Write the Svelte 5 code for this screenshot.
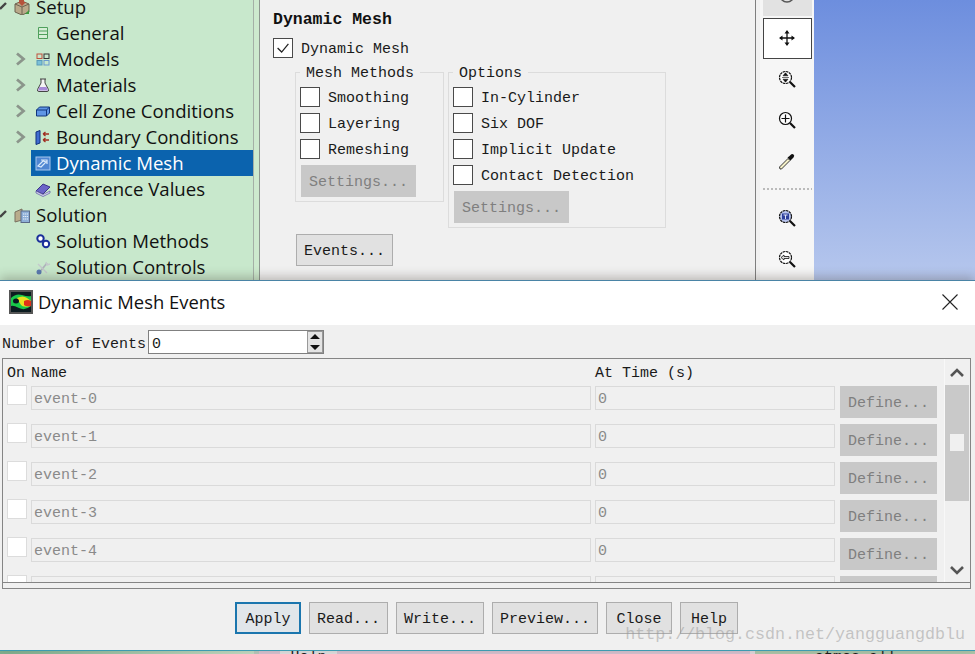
<script lang="ts">
  const tree = [
    { label: "Setup", top: true, open: true, icon: "setup" },
    { label: "General", icon: "general" },
    { label: "Models", arrow: true, icon: "models" },
    { label: "Materials", arrow: true, icon: "materials" },
    { label: "Cell Zone Conditions", arrow: true, icon: "cell" },
    { label: "Boundary Conditions", arrow: true, icon: "boundary" },
    { label: "Dynamic Mesh", selected: true, icon: "dynamic" },
    { label: "Reference Values", icon: "reference" },
    { label: "Solution", top: true, open: true, icon: "solution" },
    { label: "Solution Methods", icon: "methods" },
    { label: "Solution Controls", icon: "controls" },
  ];

  const meshMethods = ["Smoothing", "Layering", "Remeshing"];
  const options = ["In-Cylinder", "Six DOF", "Implicit Update", "Contact Detection"];
  const events = [0, 1, 2, 3, 4, 5];
  const zoomTools = ["fit", "plus", "dropper"];
</script>

{#snippet treeIcon(name)}
  <svg class="ticon" viewBox="0 0 16 16" aria-hidden="true">
    {#if name === "setup"}
      <path d="M1 5l7-3 7 3v8l-7 3-7-3z" fill="#b9a98a" stroke="#6d6250" />
      <path d="M1 5l7 3 7-3M8 8v8" fill="none" stroke="#6d6250" />
      <path d="M5 0h5v3h2L8 7 4 3h1z" fill="#b5533c" />
      <path d="M11 15l4-4v4z" fill="#3c9a3c" />
    {:else if name === "general"}
      <path d="M3.5 2.5h9v11h-9zM3.5 6h9M3.5 9.500h9" fill="#d6eed6" stroke="#4fa05c" />
    {:else if name === "models"}
      <rect x="2" y="3" width="5" height="4.500" fill="none" stroke="#c0503c" />
      <rect x="9" y="3" width="5" height="4.500" fill="none" stroke="#333" />
      <rect x="2" y="9.500" width="5" height="4.500" fill="#7cc0d8" stroke="#5a9ab8" />
      <rect x="9" y="9.500" width="5" height="4.500" fill="none" stroke="#6a9ad0" />
    {:else if name === "materials"}
      <path d="M5 2h6M6 2v4l-3.500 6.500q-.5 2 1.500 2h8q2 0 1.500-2L10 6V2" fill="#f3f3f3" stroke="#444" />
      <path d="M4.500 10h7l1.500 3.500H3z" fill="#a78ad8" />
    {:else if name === "cell"}
      <path d="M1.500 7l3-3h10v6l-3 3h-10z" fill="#5f96e6" stroke="#12367c" />
      <path d="M1.500 7h10v6M11.500 7l3-3" fill="none" stroke="#12367c" />
    {:else if name === "boundary"}
      <path d="M1 3l4-1.500V14l-4 1.500z" fill="#3f6cd0" stroke="#10307c" />
      <path d="M8 5h6M8 5l2.500-2M8 5l2.500 2M8 11h6M8 11l2.500-2M8 11l2.500 2" fill="none" stroke="#a02c20" stroke-width="1.300" />
    {:else if name === "dynamic"}
      <rect x="1" y="2" width="14" height="13" fill="#4f86d2" stroke="#a8c8ee" />
      <path d="M3 11l5-5 3 1-5 5zM6 5h6v4" fill="none" stroke="#d8e8fa" stroke-width="1.200" />
    {:else if name === "reference"}
      <path d="M1 10l7-7 7 3-7 7z" fill="#6a64c8" stroke="#3c3488" />
      <path d="M1 10l7 3.500 7-3.500v2l-7 3.500-7-3.500z" fill="#d8d8ee" stroke="#5a54a0" stroke-width=".7" />
    {:else if name === "solution"}
      <path d="M1 5l7-3v11l-7 2z" fill="#b9ac8c" stroke="#7a7060" />
      <rect x="7" y="4" width="8.500" height="11.500" fill="#8fb0d8" stroke="#5a6a88" />
      <path d="M9 7h5M9 9.500h5M9 12h5" stroke="#e6eef8" stroke-dasharray="1.300 .6" />
    {:else if name === "methods"}
      <circle cx="5.500" cy="5.500" r="3.200" fill="#fff" stroke="#1a2f9a" stroke-width="2" />
      <circle cx="11" cy="11" r="3.200" fill="#fff" stroke="#1a2f9a" stroke-width="2" />
    {:else if name === "controls"}
      <path d="M4 14l8-10" stroke="#aeb4ba" stroke-width="1.800" />
      <path d="M3 5l9 9M11 3l1 3 3-1" fill="none" stroke="#c4c8cc" stroke-width="1.400" />
      <circle cx="4" cy="13" r="2.500" fill="#5a7ab0" />
    {/if}
  </svg>
{/snippet}

{#snippet toolIcon(name)}
  <svg class="tool-icon" viewBox="0 0 20 20" aria-hidden="true">
    {#if name === "move"}
      <path d="M10 3v14M3 10h14" stroke="#111" stroke-width="1.300" />
      <path d="M10 2l-2.500 3.500h5zM10 18l-2.500-3.500h5zM2 10l3.500-2.500v5zM18 10l-3.500-2.500v5z" fill="#111" />
    {:else if name === "rotate"}
      <circle cx="10" cy="10" r="7" fill="none" stroke="#555" stroke-width="1.500" />
    {:else if name === "dropper"}
      <path d="M3 18l-.5-2L11 7.500l2 2L4.500 18z" fill="#f4f0c8" stroke="#222" stroke-width=".9" />
      <path d="M10.500 6.500l3 3 2-2 1-1q1.500-2 0-3t-3 .5l-1 1z" fill="#111" />
    {:else}
      <circle cx="8.500" cy="8.500" r="6" fill={name === "box" ? "#b8c4ee" : "#fff"} stroke="#111" stroke-width="1.200" stroke-dasharray={name === "fit" || name === "box" || name === "back" ? "2.500 .6" : "none"} />
      <path d="M13 13l5 5" stroke="#111" stroke-width="2.200" />
      {#if name === "plus"}
        <path d="M8.500 4.500v8M4.500 8.500h8" stroke="#111" stroke-width="1.200" />
      {:else if name === "fit"}
        <path d="M8.500 3.800l-2.500 3h5zM8.500 13.200l-2.500-3h5zM5 8.500h7" fill="#111" stroke="#111" stroke-width=".6" />
      {:else if name === "box"}
        <path d="M5 5.500h7v6H5z" fill="#2c3e9a" />
        <path d="M6.500 7h4M8.500 7v4" stroke="#dfe4f6" />
      {:else if name === "back"}
        <path d="M4 8.500l3-2.500v1.500h5v2H7V11z" fill="#e0e0e0" stroke="#111" stroke-width=".8" />
      {/if}
    {/if}
  </svg>
{/snippet}

<div class="screen">
  <div class="workspace">
    <nav class="tree">
      {#each tree as row}
        <div class="row">
          <span class="twist" class:top={row.top}>
            {#if row.open}
              <svg viewBox="0 0 11 26" aria-hidden="true"><path d="M0 15l6-6" fill="none" stroke="#444" stroke-width="2.400" /></svg>
            {:else if row.arrow}
              <svg viewBox="0 0 31 26" aria-hidden="true"><path d="M17 7.500l6.500 5.500-6.500 5.500" fill="none" stroke="#8b958b" stroke-width="2.800" /></svg>
            {/if}
          </span>
          <span class="item" class:selected={row.selected} class:top={row.top}>
            {@render treeIcon(row.icon)}
            <span>{row.label}</span>
          </span>
        </div>
      {/each}
    </nav>
    <div class="gutter"></div>

    <section class="panel">
      <h2>Dynamic Mesh</h2>
      <label class="check main">
        <span class="box">
          <svg viewBox="0 0 20 20" aria-hidden="true"><path d="M4 10l4.500 4.500L16 5.500" fill="none" stroke="#222" stroke-width="1.400" /></svg>
        </span>
        Dynamic Mesh
      </label>
      <div class="groups">
        <fieldset class="methods">
          <legend>Mesh Methods</legend>
          {#each meshMethods as name}
            <label class="check"><span class="box"></span>{name}</label>
          {/each}
          <button class="btn off">Settings...</button>
        </fieldset>
        <fieldset class="options">
          <legend>Options</legend>
          {#each options as name}
            <label class="check"><span class="box"></span>{name}</label>
          {/each}
          <button class="btn off">Settings...</button>
        </fieldset>
      </div>
      <button class="btn events-btn">Events...</button>
    </section>

    <div class="side-gap"></div>
    <aside class="toolbar">
      <div class="tool first">{@render toolIcon("rotate")}</div>
      <div class="tool active">{@render toolIcon("move")}</div>
      {#each zoomTools as tool}
        <div class="tool">{@render toolIcon(tool)}</div>
      {/each}
      <div class="separator"></div>
      <div class="tool">{@render toolIcon("box")}</div>
      <div class="tool">{@render toolIcon("back")}</div>
    </aside>
    <div class="viewport"></div>
  </div>

  <div class="dialog">
    <header class="titlebar">
      <svg class="app-icon" viewBox="0 0 24 24" aria-hidden="true">
        <rect width="24" height="24" fill="#555" />
        <rect x="2" y="2" width="20" height="20" fill="#0c1c20" />
        <path d="M2 8q5-5 11-3t9 1v10q-6 5-12 2t-8-2z" fill="#18c84a" />
        <path d="M8 8q6-3 10 0t4 3v5q-8 2-10-1t-4-7z" fill="#e8e020" />
        <path d="M15 11q4-2 7 0v5q-5 1-7-1z" fill="#e03018" />
        <ellipse cx="7" cy="11" rx="3" ry="2.500" fill="#0a1420" />
      </svg>
      <span class="title">Dynamic Mesh Events</span>
      <svg class="close" viewBox="0 0 16 16" aria-hidden="true"><path d="M.5.500l15 15M15.500.500l-15 15" stroke="#222" stroke-width="1.100" /></svg>
    </header>

    <div class="body">
      <div class="count">
        <span class="count-label">Number of Events</span>
        <div class="spin">
          <span class="count-label">0</span>
          <span class="spin-btns">
            <svg viewBox="0 0 16 22" aria-hidden="true">
              <rect x=".5" y=".5" width="15" height="21" fill="#e4e4e4" stroke="#999" />
              <path d="M8 3l-5 5h10zM8 19l-5-5h10z" fill="#111" />
            </svg>
          </span>
        </div>
      </div>

      <div class="events">
        <div class="scroller">
          <div class="rows">
            <div class="grid head">
              <span>On</span>
              <span>Name</span>
              <span>At Time (s)</span>
            </div>
            {#each events as n}
              <div class="grid event">
                <span class="box faint"></span>
                <span class="field">event-{n}</span>
                <span class="field">0</span>
                <button class="btn off define">Define...</button>
              </div>
            {/each}
          </div>
          <div class="scrollbar">
            <svg class="sb-arrow" viewBox="0 0 24 26" aria-hidden="true"><path d="M6 17l6-6 6 6" fill="none" stroke="#555" stroke-width="2.600" /></svg>
            <div class="track"><div class="thumb"></div></div>
            <div class="sb-space"></div>
            <svg class="sb-arrow" viewBox="0 0 24 26" aria-hidden="true"><path d="M6 11l6 6 6-6" fill="none" stroke="#555" stroke-width="2.600" /></svg>
          </div>
        </div>
      </div>

      <footer class="actions">
        <button class="btn plain focus">Apply</button>
        <button class="btn">Read...</button>
        <button class="btn">Write...</button>
        <button class="btn">Preview...</button>
        <button class="btn plain">Close</button>
        <button class="btn plain help">Help</button>
      </footer>
    </div>
    <div class="watermark">http://blog.csdn.net/yangguangdblu</div>
  </div>

  <div class="strip">
    <div class="strip-left"></div>
    <div class="strip-mid"><span class="strip-help">Help</span></div>
    <div class="strip-right"><span>atmos all</span></div>
  </div>
</div>

<style>
  :global(body) {
    margin: 0;
    background: #f0f0f0;
  }
  .screen {
    width: 975px;
    height: 654px;
    overflow: hidden;
    font-family: "Liberation Mono", monospace;
    font-size: 15px;
    color: #1a1a1a;
    display: flex;
    flex-direction: column;
  }
  .workspace {
    height: 280px;
    display: flex;
    overflow: hidden;
    flex: none;
  }

  .tree {
    width: 253px;
    background: #c8e8cc;
    border-right: 1px solid #a4b0a6;
    font-family: "Open Sans", sans-serif;
    font-size: 18.6px;
    color: #111;
    margin-top: -6px;
    flex: none;
  }
  .row {
    display: flex;
    height: 26px;
  }
  .twist {
    width: 31px;
    flex: none;
  }
  .twist.top {
    width: 11px;
  }
  .twist svg {
    display: block;
    height: 26px;
    width: 100%;
  }
  .item {
    flex: 1;
    display: flex;
    align-items: center;
    gap: 5px;
    padding-left: 4px;
    line-height: 26px;
    white-space: nowrap;
  }
  .item.top {
    padding-left: 3px;
    gap: 6px;
  }
  .item.selected {
    background: #0b63ae;
    color: #fff;
  }
  .ticon {
    width: 16px;
    height: 16px;
    flex: none;
  }
  .gutter {
    width: 5px;
    background: #cdeace;
    border-right: 1px solid #8d968f;
    flex: none;
  }

  .panel {
    width: 496px;
    box-sizing: border-box;
    background: #f0f0f0;
    border-right: 1px solid #7e7e7e;
    padding: 11px 0 0 13px;
    flex: none;
  }
  h2 {
    margin: 0;
    font-size: 16.5px;
    font-weight: bold;
    line-height: 18px;
    color: #111;
  }
  .check {
    display: flex;
    align-items: center;
    gap: 8px;
    height: 26px;
    box-sizing: border-box;
    padding-top: 2px;
    white-space: nowrap;
  }
  .check .box {
    margin-top: -2px;
  }
  .main {
    margin-top: 9px;
    height: 20px;
  }
  .box {
    display: block;
    width: 18px;
    height: 18px;
    border: 1px solid #4a4a4a;
    background: #fff;
    flex: none;
  }
  .box svg {
    display: block;
    width: 18px;
    height: 18px;
  }
  .box.faint {
    border-color: #dcdcdc;
  }
  .groups {
    display: flex;
    gap: 4px;
    margin: 5px 0 0 22px;
    align-items: flex-start;
  }
  fieldset {
    margin: 0;
    padding: 3px 4px 4px 4px;
    border: 1px solid #dcdcdc;
    box-sizing: border-box;
    min-width: 0;
  }
  legend {
    padding: 4px 6px 0;
    line-height: 14px;
  }
  .methods {
    width: 149px;
    height: 139px;
  }
  .options {
    width: 218px;
    height: 165px;
  }
  .btn {
    font: inherit;
    color: #1a1a1a;
    height: 32px;
    padding: 2px 7px 0;
    background: #e1e1e1;
    border: 1px solid #adadad;
    box-sizing: border-box;
    white-space: nowrap;
  }
  .btn.plain {
    padding: 2px 9.5px 0;
  }
  .btn.help {
    padding: 2px 10px 0;
  }
  .off {
    background: #c8c8c8;
    border-color: #c8c8c8;
    color: #7f7f7f;
  }
  fieldset .btn {
    display: block;
    margin: 3px 0 0 1px;
  }
  .events-btn {
    margin: 6px 0 0 23px;
    display: block;
  }

  .side-gap {
    width: 4px;
    background: #f0f0f0;
    flex: none;
  }
  .toolbar {
    width: 54px;
    box-sizing: border-box;
    padding: 0 2px 0 3px;
    background: #f6f6f6;
    margin-top: -24px;
    flex: none;
  }
  .tool {
    height: 41px;
    box-sizing: border-box;
    display: flex;
    align-items: center;
    justify-content: center;
  }
  .tool.first {
    height: 40px;
    background: #e2e2e2;
    margin-bottom: 2px;
  }
  .tool.active {
    background: #fff;
    border: 1px solid #444;
  }
  .tool-icon {
    width: 20px;
    height: 20px;
    margin: 0 2px 2px 0;
  }
  .separator {
    height: 16px;
    background: linear-gradient(#bbb, #bbb) 0 6px / 100% 2px no-repeat;
    mask: repeating-linear-gradient(90deg, #000 0 2px, transparent 2px 4px);
  }
  .viewport {
    flex: 1;
    background: linear-gradient(#6d8ede, #b6c7ed);
  }

  .dialog {
    position: relative;
    height: 371px;
    flex: none;
    box-sizing: border-box;
    border-top: 1px solid #4a84a6;
    border-bottom: 1px solid #3d9bb0;
    background: #f0f0f0;
    box-shadow: 0 -3px 10px rgba(60, 50, 40, 0.3);
  }
  .titlebar {
    height: 44px;
    box-sizing: border-box;
    padding: 0 17px 3px 9px;
    background: #fff;
    display: flex;
    align-items: center;
    font-family: "Open Sans", sans-serif;
    font-size: 18.4px;
    color: #111;
  }
  .app-icon {
    width: 24px;
    height: 24px;
    margin-right: 5px;
  }
  .title {
    flex: 1;
  }
  .close {
    width: 16px;
    height: 16px;
  }
  .count {
    display: flex;
    align-items: center;
    gap: 2px;
    height: 24px;
    padding: 5px 0 0 2px;
  }
  .count-label {
    padding-top: 4px;
  }
  .spin {
    width: 176px;
    height: 24px;
    box-sizing: border-box;
    background: #fff;
    border: 1px solid #808080;
    display: flex;
    align-items: center;
    justify-content: space-between;
    padding: 0 0 0 3px;
  }
  .spin-btns svg {
    display: block;
    width: 16px;
    height: 22px;
  }
  .events {
    margin: 4px 4px 0 2px;
    height: 231px;
    box-sizing: border-box;
    border: 1px solid #858585;
  }
  .scroller {
    height: 224px;
    box-sizing: border-box;
    border-bottom: 1px solid #858585;
    display: flex;
    overflow: hidden;
  }
  .rows {
    width: 941px;
    padding-left: 4px;
    box-sizing: border-box;
    overflow: hidden;
    flex: none;
  }
  .grid {
    display: grid;
    grid-template-columns: 20px 560px 240px 97px;
    column-gap: 4px;
  }
  .grid > :nth-child(4) {
    margin-left: 1px;
  }
  .head {
    height: 26px;
    line-height: 30px;
  }
  .event {
    height: 38px;
    align-items: start;
  }
  .field {
    height: 24px;
    line-height: 26px;
    margin-top: 1px;
    box-sizing: border-box;
    border: 1px solid #dadada;
    padding-left: 2px;
    color: #8a8a8a;
  }
  .define {
    margin-top: 1px;
    width: 97px;
  }
  .scrollbar {
    width: 24px;
    display: flex;
    flex-direction: column;
    border-left: 1px solid #f8f8f8;
  }
  .sb-arrow {
    width: 24px;
    height: 26px;
    flex: none;
  }
  .track {
    height: 116px;
    background: #c9c9c9;
    padding: 49px 5px 0;
    box-sizing: border-box;
    flex: none;
  }
  .thumb {
    height: 17px;
    background: #f0f0f0;
  }
  .sb-space {
    flex: 1;
  }
  .actions {
    display: flex;
    justify-content: center;
    gap: 8px;
    margin-top: 13px;
    padding-right: 2px;
  }
  .btn.focus {
    border: 2px solid #1b76ae;
    background: #e1e6ea;
    padding: 2px 8.5px 0;
  }
  .watermark {
    position: absolute;
    right: 10px;
    bottom: 6px;
    font-size: 16.67px;
    color: rgba(150, 150, 150, 0.5);
    pointer-events: none;
    white-space: nowrap;
  }

  .strip {
    flex: 1;
    display: flex;
    overflow: hidden;
    line-height: 14px;
  }
  .strip-left {
    width: 254px;
    background: linear-gradient(90deg, #7fb08f, #c4dcc4);
    border-right: 5px solid #b8c8bc;
  }
  .strip-mid {
    width: 496px;
    background: #d8c2d0;
    border-right: 5px solid #e0d8dc;
    padding-left: 21px;
    box-sizing: border-box;
  }
  .strip-help {
    display: block;
    width: 57px;
    height: 4px;
    overflow: hidden;
    background: #e0e0e0;
    text-align: center;
  }
  .strip-right {
    flex: 1;
    background: #adc6aa;
    padding-left: 60px;
  }
</style>
